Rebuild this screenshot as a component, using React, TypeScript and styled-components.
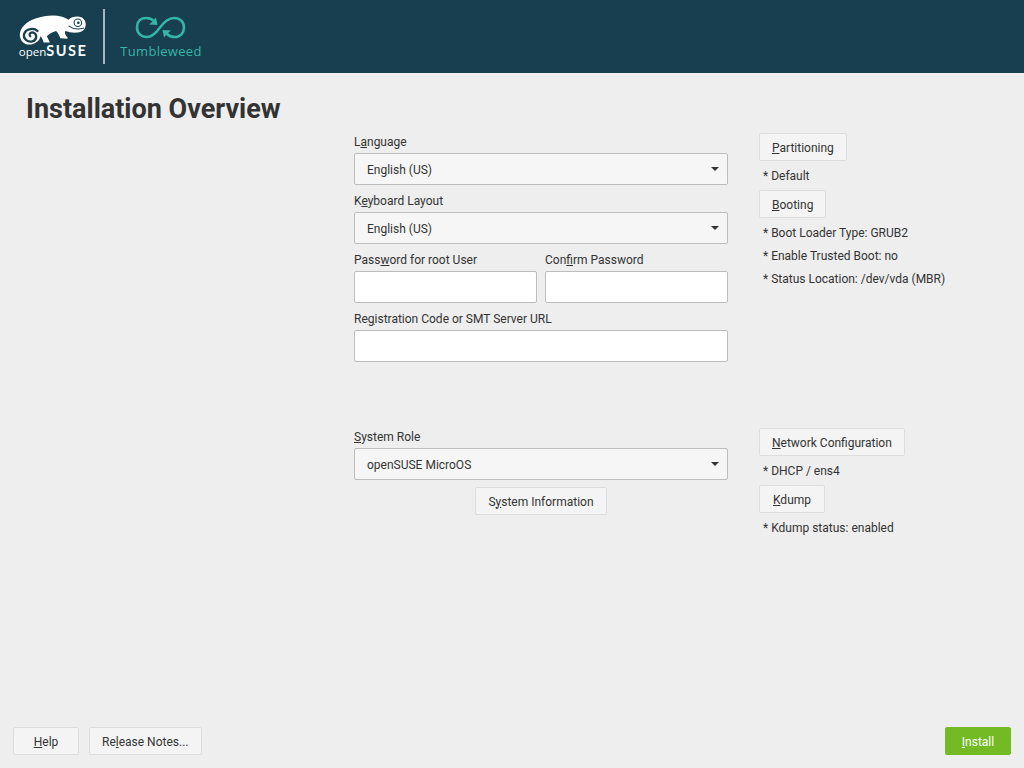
import React from "react";
import styled, {createGlobalStyle} from "styled-components";

const GlobalStyle = createGlobalStyle`
    html, body {
        margin: 0;
        padding: 0;
        background: #eeeeee;
    }
    body {
        font-family: Roboto, "Liberation Sans", sans-serif;
        font-size: 12px;
        color: #333333;
    }
`;

const Page = styled.div`
    width: 1024px;
    height: 768px;
    display: flex;
    flex-direction: column;
    overflow: hidden;
`;

const Header = styled.header`
    height: 73px;
    background: #173f4f;
    display: flex;
    align-items: flex-start;
    padding-left: 18px;
    box-sizing: border-box;
    flex: none;
`;

const LogoBlock = styled.div`
    display: flex;
    flex-direction: column;
    align-items: center;
    width: 70px;
    padding-top: 15px;
`;

const LogoWord = styled.div`
    font-family: "Open Sans", sans-serif;
    font-size: 11.5px;
    line-height: 11px;
    color: #ffffff;
    white-space: nowrap;
`;

const LogoBold = styled.span`
    font-family: Lato, sans-serif;
    font-weight: 700;
    font-size: 14.5px;
    letter-spacing: 1.5px;
`;

const Divider = styled.div`
    width: 2px;
    height: 55px;
    background: #a9b8be;
    margin: 9px 15px 0 15px;
`;

const FlavorBlock = styled.div`
    display: flex;
    flex-direction: column;
    align-items: center;
    width: 82px;
    padding-top: 15px;
`;

const FlavorWord = styled.div`
    font-family: "Open Sans", sans-serif;
    font-size: 13px;
    line-height: 15px;
    letter-spacing: 0.3px;
    color: #35b5a6;
    margin-top: 4px;
`;

const Title = styled.h1`
    margin: 0;
    height: 60px;
    padding: 22px 0 0 26px;
    box-sizing: border-box;
    font-size: 27px;
    line-height: 29px;
    font-weight: 700;
    color: #333333;
`;

const Content = styled.main`
    flex: 1;
    display: flex;
    flex-direction: column;
    gap: 66px;
`;

const Section = styled.section`
    display: grid;
    grid-template-columns: 354px 374px 1fr;
    align-items: start;
`;

const MiddleColumn = styled.div`
    grid-column: 2;
    display: flex;
    flex-direction: column;
    gap: 7px;
`;

const RightColumn = styled.div`
    grid-column: 3;
    padding-left: 31px;
    display: flex;
    flex-direction: column;
    align-items: flex-start;
`;

const Field = styled.div`
    display: flex;
    flex-direction: column;
    min-width: 0;
`;

const FieldRow = styled.div`
    display: grid;
    grid-template-columns: 1fr 1fr;
    gap: 8px;
`;

const Label = styled.label`
    height: 20px;
    line-height: 18px;
    color: #333333;
    white-space: nowrap;
`;

const Mnemonic = styled.u`
    text-underline-offset: 1px;
    text-decoration-thickness: 1px;
`;

const Select = styled.div`
    height: 32px;
    box-sizing: border-box;
    border: 1px solid #bdbdbd;
    border-radius: 2px;
    background: #f6f6f6;
    display: flex;
    align-items: center;
    justify-content: space-between;
    padding: 1px 8px 0 12px;
`;

const Caret = styled.span`
    width: 0;
    height: 0;
    border-left: 4px solid transparent;
    border-right: 4px solid transparent;
    border-top: 4px solid #333333;
    margin-top: -2px;
`;

const TextInput = styled.input`
    height: 32px;
    width: 100%;
    box-sizing: border-box;
    border: 1px solid #bdbdbd;
    border-radius: 2px;
    background: #ffffff;
    padding: 0 12px;
    outline: none;
    font: inherit;
`;

const Button = styled.button<{$primary?: boolean}>`
    height: 28px;
    min-width: 66px;
    box-sizing: border-box;
    padding: 1px 12px 0;
    border: 1px solid ${p => p.$primary ? "#73ba25" : "#dddddd"};
    border-radius: 2px;
    background: ${p => p.$primary ? "#73ba25" : "#f4f4f4"};
    color: ${p => p.$primary ? "#ffffff" : "#333333"};
    font: inherit;
    white-space: nowrap;
    cursor: pointer;
`;

const CenteredAction = styled.div`
    display: flex;
    justify-content: center;
`;

const Info = styled.div`
    padding: 4px 0 2px 4px;
    line-height: 23px;
    white-space: nowrap;
`;

const Footer = styled.footer`
    flex: none;
    display: flex;
    align-items: center;
    gap: 10px;
    padding: 0 13px 13px;
`;

const Spacer = styled.div`
    flex: 1;
`;

const Chameleon = () => (
    <svg width="68" height="30" viewBox="21.5 15.5 65 29" aria-hidden="true">
        <path
            fill="#ffffff"
            d="M22 36 C21 29 28 22 37 19 C46 16 55 15 62 17 C65 18 67 19 69 20 C72 17 78 16 82 18 C85 20 86 23 85.5 26 C85 30 82 32 78 32.5 C73 33 69 32 66 31 C65 33 66 35 68 37 L68 38.5 L61 38 C60 35 59 33 57 31 C53 32 50 34 48 36 C49 38 50 40 51 42 L45 42 C44 39 43 37 42 36 C41 41 36 44 31 44 C26 44 23 41 22 36 Z"
        />
        <path
            fill="none"
            stroke="#173f4f"
            strokeWidth="2.2"
            strokeLinecap="round"
            d="M39 31 C36 28 28 28 26 34 C25 39 30 42 34 41 C38 40 39 35 36 33 C33 31 30 34 32 36"
        />
        <circle cx="78" cy="23" r="3.6" fill="none" stroke="#173f4f" strokeWidth="1" />
        <circle cx="78.5" cy="23" r="1.3" fill="#173f4f" />
        <path fill="none" stroke="#173f4f" strokeWidth="1" d="M69 26 C73 29 78 30 84 28" />
    </svg>
);

const Infinity = () => (
    <svg width="52" height="25" viewBox="135 15 52 25" aria-hidden="true">
        <g fill="none" stroke="#35b5a6" strokeWidth="2.6" strokeLinecap="round">
            <path d="M154 21 C152 19 149 18 146 18 C140 18 137 22 137 27.5 C137 33 141 37 147 37 C152 37 156 33 160 27.5 C164 22 168 18 174 18 C180 18 184 22 184 27.5 C184 33 180 37 175 37 C172 37 169 36 167 34" />
        </g>
        <path fill="#35b5a6" d="M157.5 25 L149 24.5 L152.5 21.5 L156 17.5 Z" />
        <path fill="#35b5a6" d="M162.5 30 L171 30.5 L167.5 33.5 L164 37.5 Z" />
    </svg>
);

export default function App() {
    return (
        <Page>
            <GlobalStyle/>
            <Header>
                <LogoBlock>
                    <Chameleon/>
                    <LogoWord>open<LogoBold>SUSE</LogoBold></LogoWord>
                </LogoBlock>
                <Divider/>
                <FlavorBlock>
                    <Infinity/>
                    <FlavorWord>Tumbleweed</FlavorWord>
                </FlavorBlock>
            </Header>
            <Title>Installation Overview</Title>
            <Content>
                <Section>
                    <MiddleColumn>
                        <Field>
                            <Label>L<Mnemonic>a</Mnemonic>nguage</Label>
                            <Select>English (US)<Caret/></Select>
                        </Field>
                        <Field>
                            <Label>K<Mnemonic>e</Mnemonic>yboard Layout</Label>
                            <Select>English (US)<Caret/></Select>
                        </Field>
                        <FieldRow>
                            <Field>
                                <Label>Pass<Mnemonic>w</Mnemonic>ord for root User</Label>
                                <TextInput type="password"/>
                            </Field>
                            <Field>
                                <Label>Con<Mnemonic>f</Mnemonic>irm Password</Label>
                                <TextInput type="password"/>
                            </Field>
                        </FieldRow>
                        <Field>
                            <Label>Re<Mnemonic>g</Mnemonic>istration Code or SMT Server URL</Label>
                            <TextInput type="text"/>
                        </Field>
                    </MiddleColumn>
                    <RightColumn>
                        <Button><Mnemonic>P</Mnemonic>artitioning</Button>
                        <Info>* Default</Info>
                        <Button><Mnemonic>B</Mnemonic>ooting</Button>
                        <Info>
                            * Boot Loader Type: GRUB2<br/>
                            * Enable Trusted Boot: no<br/>
                            * Status Location: /dev/vda (MBR)
                        </Info>
                    </RightColumn>
                </Section>
                <Section>
                    <MiddleColumn>
                        <Field>
                            <Label><Mnemonic>S</Mnemonic>ystem Role</Label>
                            <Select>openSUSE MicroOS<Caret/></Select>
                        </Field>
                        <CenteredAction>
                            <Button>S<Mnemonic>y</Mnemonic>stem Information</Button>
                        </CenteredAction>
                    </MiddleColumn>
                    <RightColumn>
                        <Button><Mnemonic>N</Mnemonic>etwork Configuration</Button>
                        <Info>* DHCP / ens4</Info>
                        <Button><Mnemonic>K</Mnemonic>dump</Button>
                        <Info>* Kdump status: enabled</Info>
                    </RightColumn>
                </Section>
            </Content>
            <Footer>
                <Button><Mnemonic>H</Mnemonic>elp</Button>
                <Button>Re<Mnemonic>l</Mnemonic>ease Notes...</Button>
                <Spacer/>
                <Button $primary><Mnemonic>I</Mnemonic>nstall</Button>
            </Footer>
        </Page>
    );
}
